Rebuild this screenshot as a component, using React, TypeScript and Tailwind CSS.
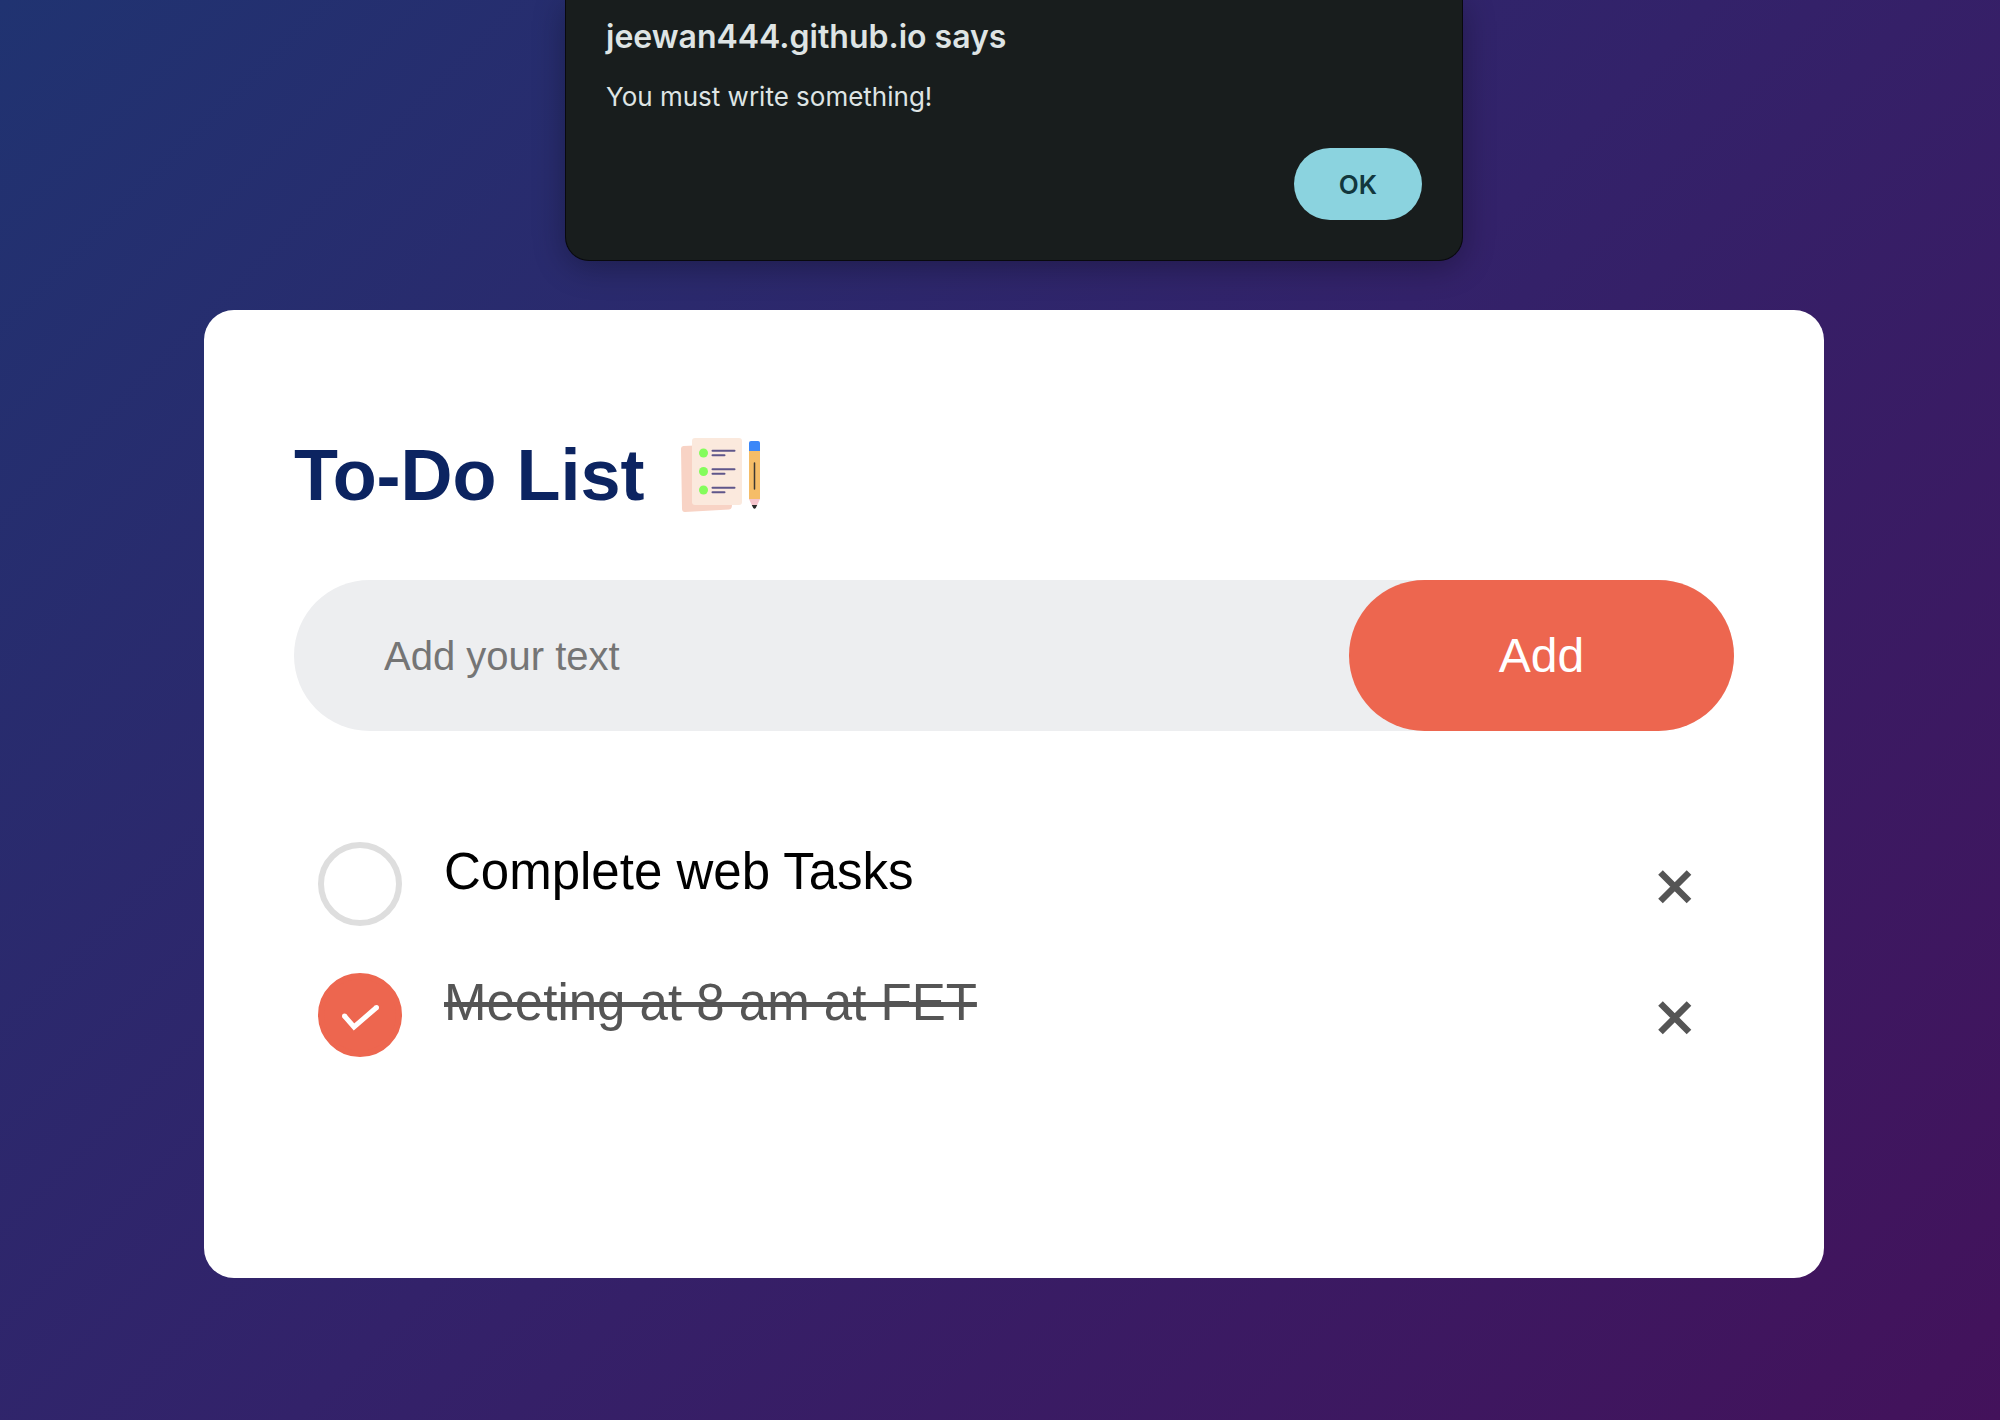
import { useState } from "react";

type Task = { id: string; text: string; done: boolean };

const initialTasks: Task[] = [
  { id: "task-1", text: "Complete web Tasks", done: false },
  { id: "task-2", text: "Meeting at 8 am at FET", done: true },
];

function ListIcon() {
  return (
    <svg className="h-[90px] w-[90px] shrink-0" viewBox="0 0 90 90" fill="none" aria-hidden="true">
      <path d="M6 19 Q5.900 16.200 8.500 16 L54 14 L57 75 Q57 79.300 54 79.600 L10 81.900 Q7.200 82 7 79 Z" fill="#f8d3c5" />
      <rect x="17" y="8" width="50" height="67" rx="3" fill="#fbe9dd" />
      {[23, 41.500, 60].map((y) => (
        <g key={y}>
          <circle cx="28.500" cy={y} r="4.500" fill="#84fc5c" />
          <path d={`M37.500 ${y - 2.300}H59.500M37.500 ${y + 2.300}H49.500`} stroke="#5f568a" strokeWidth="2" strokeLinecap="round" />
        </g>
      ))}
      <path d="M74 21H85V69H74Z" fill="#f5bd68" />
      <path d="M74 21V13Q74 11 76 11H83Q85 11 85 13V21Z" fill="#3b87f8" />
      <path d="M74 69H85L81.800 76H77.200Z" fill="#f6c5cd" />
      <path d="M76.800 75H82.200L81 77.500Q79.500 80 78 77.500Z" fill="#2a2a2a" />
      <path d="M79.500 33V59" stroke="#3d3933" strokeWidth="1.500" strokeLinecap="round" />
    </svg>
  );
}

function TaskRow({ task, onToggle, onRemove }: { task: Task; onToggle: () => void; onRemove: () => void }) {
  return (
    <li className="flex h-[131px] items-start pl-6">
      <div className="relative mt-9 size-[84px] shrink-0">
        <input
          id={task.id}
          type="checkbox"
          checked={task.done}
          onChange={onToggle}
          className="block size-full cursor-pointer appearance-none rounded-full border-6 border-[#dedede] checked:border-[#ed664f] checked:bg-[#ed664f]"
        />
        {task.done && (
          <svg className="pointer-events-none absolute inset-0 size-full" viewBox="0 0 84 84" fill="none" aria-hidden="true">
            <path d="M26.500 43 L36 54 L58.500 34.500" stroke="#fff" strokeWidth="5" />
            <circle cx="26.500" cy="43" r="2.500" fill="#fff" />
            <circle cx="58.500" cy="34.500" r="2.500" fill="#fff" />
          </svg>
        )}
      </div>
      <label
        htmlFor={task.id}
        className={
          task.done
            ? "ml-[42px] mt-9 flex-1 cursor-pointer text-[51px] leading-[59px] text-[#555] line-through decoration-[5px]"
            : "ml-[42px] mt-9 flex-1 cursor-pointer text-[51px] leading-[59px] text-black"
        }
      >
        {task.text}
      </label>
      <button
        type="button"
        onClick={onRemove}
        aria-label={`Remove ${task.text}`}
        className="mt-10 flex h-[82px] w-[120px] shrink-0 cursor-pointer items-center justify-center"
      >
        <svg className="size-9" viewBox="0 0 36 36" fill="none" aria-hidden="true">
          <path d="M4.500 3.500 L33 32 M33 3.500 L4.500 32" stroke="#555" strokeWidth="6.500" />
        </svg>
      </button>
    </li>
  );
}

export default function App() {
  const [tasks, setTasks] = useState(initialTasks);
  const [draft, setDraft] = useState("");
  const [alertOpen, setAlertOpen] = useState(true);

  const addTask = () => {
    if (!draft.trim()) {
      setAlertOpen(true);
      return;
    }
    setTasks([...tasks, { id: `task-${Date.now()}`, text: draft, done: false }]);
    setDraft("");
  };

  return (
    <div className="relative min-h-screen bg-linear-135/srgb from-[#203371] via-[#33226a] to-[#43125b] pl-7 pt-[310px] pb-[142px] font-['Liberation_Sans',Arial,sans-serif]">
      {alertOpen && (
        <div className="absolute inset-x-0 top-0 flex justify-center pl-7">
          <div
            role="alertdialog"
            aria-labelledby="alert-title"
            aria-describedby="alert-text"
            className="w-full max-w-[898px] rounded-b-3xl border border-t-0 border-[#08090d] bg-[#181d1d] px-10 pt-[17px] pb-10 font-[Inter,sans-serif] text-[#dee4e4] shadow-[0_6px_32px_rgba(0,0,0,0.3)]"
          >
            <h2 id="alert-title" className="text-[32px] leading-10 font-semibold">jeewan444.github.io says</h2>
            <p id="alert-text" className="mt-5 text-[26px] leading-10">You must write something!</p>
            <div className="mt-[31px] flex justify-end">
              <button
                type="button"
                onClick={() => setAlertOpen(false)}
                className="h-[72px] w-32 cursor-pointer rounded-full bg-[#8bd3df] text-[26px] font-semibold text-[#12373d]"
              >
                OK
              </button>
            </div>
          </div>
        </div>
      )}

      <main className="mx-auto w-full max-w-[1620px] rounded-[30px] bg-white px-[90px] pt-[120px] pb-[210px]">
        <div className="mb-[60px] flex h-[90px] items-center gap-[30px]">
          <h1 className="text-[72px] leading-[90px] font-bold text-[#0c2461]">To-Do List</h1>
          <ListIcon />
        </div>

        <form
          className="mb-[75px] flex rounded-full bg-[#edeef0]"
          onSubmit={(e) => {
            e.preventDefault();
            addTask();
          }}
        >
          <input
            type="text"
            aria-label="New task"
            placeholder="Add your text"
            value={draft}
            onChange={(e) => setDraft(e.target.value)}
            className="min-w-0 flex-1 bg-transparent pl-[90px] text-[40px] text-black outline-none placeholder:text-[#757575]"
          />
          <button type="submit" className="h-[151px] w-[385px] cursor-pointer rounded-full bg-[#ed664f] text-5xl text-white">
            Add
          </button>
        </form>

        <ul>
          {tasks.map((task) => (
            <TaskRow
              key={task.id}
              task={task}
              onToggle={() => setTasks(tasks.map((t) => (t.id === task.id ? { ...t, done: !t.done } : t)))}
              onRemove={() => setTasks(tasks.filter((t) => t.id !== task.id))}
            />
          ))}
        </ul>
      </main>
    </div>
  );
}
